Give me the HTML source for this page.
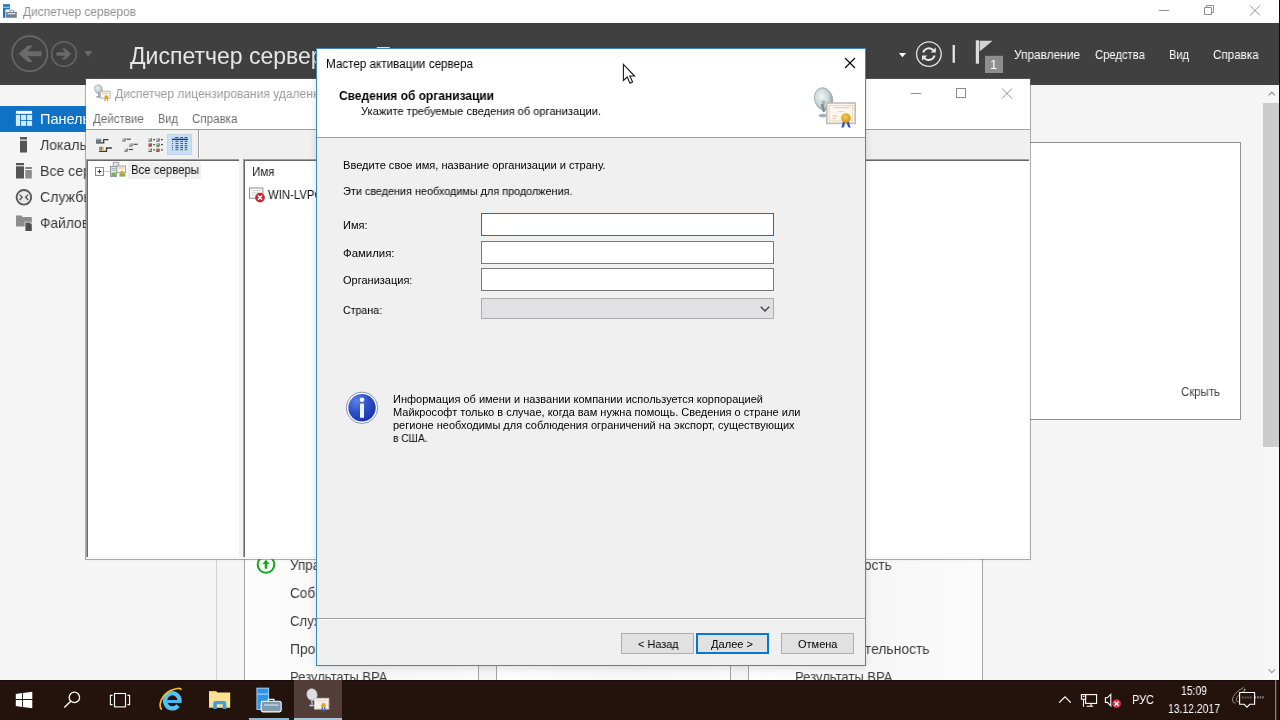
<!DOCTYPE html>
<html lang="ru">
<head>
<meta charset="utf-8">
<title>Диспетчер серверов</title>
<style>
html,body{margin:0;padding:0;}
body{width:1280px;height:720px;overflow:hidden;position:relative;background:#f5f5f5;font-family:"Liberation Sans",sans-serif;}
.a{position:absolute;}
.t{position:absolute;white-space:pre;transform-origin:0 50%;display:block;will-change:transform;}
svg{position:absolute;overflow:visible;}
/* ---------- Server Manager ---------- */
#sm{left:0;top:0;width:1280px;height:680px;background:#f5f5f5;overflow:hidden;}
#sm-title{left:0;top:0;width:1280px;height:23px;background:#fff;}
#sm-head{left:0;top:23px;width:1280px;height:62px;background:#404041;}
#nav-sel{left:0;top:106px;width:216px;height:26px;background:#1072c4;}
#sm-scroll{left:1263px;top:85px;width:17px;height:595px;background:#f6f6f6;}
#sm-thumb{left:1263px;top:103px;width:16px;height:344px;background:#cdcccd;}
#welcome{left:244px;top:142px;width:995px;height:276px;background:#fff;border:1px solid #929292;}
.tile{top:520px;width:233px;height:200px;background:linear-gradient(90deg,#fdfdfd,#f7f7f7 55%,#fbfbfb);border:1px solid #a2a2a2;}
/* ---------- Licensing Manager ---------- */
#lm{left:86px;top:79px;width:944px;height:480px;background:#fff;box-shadow:0 0 0 1px rgba(100,100,100,.5), 0 1px 3px rgba(0,0,0,.06);}
#lm-tool{left:0;top:50px;width:944px;height:30px;background:#f0f0f0;border-top:1px solid #a0a0a0;box-sizing:border-box;}
#lm-toolsel{left:81px;top:55px;width:25px;height:21px;background:#c9dff5;border:1px solid #bcd4ec;box-sizing:border-box;}
#lm-toolsep{left:112px;top:51px;width:1px;height:28px;background:#9c9c9c;box-shadow:1px 0 0 #fafafa;}
#lm-body{left:0;top:80px;width:944px;height:399px;background:#f4f4f4;}
#lm-tree{left:0;top:80px;width:153px;height:398px;background:#fff;border-left:1px solid #a0a0a0;border-top:1px solid #a0a0a0;box-shadow:inset 1px 1px 0 #696969;box-sizing:border-box;}
#lm-list{left:157px;top:80px;width:786px;height:398px;background:#fff;border-left:1px solid #a0a0a0;border-top:1px solid #a0a0a0;box-shadow:inset 1px 1px 0 #696969;box-sizing:border-box;}
#lm-treesel{left:42px;top:83px;width:73px;height:17px;background:#f0f0f0;}
/* ---------- Dialog ---------- */
#dlg{left:316px;top:48px;width:550px;height:618px;background:#f0f0f1;box-shadow:0 2px 8px rgba(0,0,0,.12);}
#dlg-border{left:0;top:0;width:550px;height:618px;box-sizing:border-box;border:1px solid #3a88c8;}
#dlg-top{left:1px;top:1px;width:548px;height:88px;background:#fff;}
#dlg-sep1{left:1px;top:89px;width:548px;height:1px;background:#a0a0a0;}
#dlg-sep2{left:1px;top:570px;width:548px;height:1px;background:#a0a0a0;}
#dlg-sep2b{left:1px;top:571px;width:548px;height:1px;background:#fff;}
.inp{left:165px;width:293px;height:23px;background:#fff;border:1px solid #7a7a7a;box-sizing:border-box;}
.btn{top:585px;width:73px;height:21px;background:#e1e1e1;border:1px solid #adadad;box-sizing:border-box;}
/* ---------- Taskbar ---------- */
#tb{left:0;top:680px;width:1280px;height:40px;background:#24120d;box-shadow:inset 0 1px 0 #1a0c09;}
#tb-act{left:294px;top:0;width:48px;height:40px;background:#523d39;}
</style>
</head>
<body>

<!-- ================= SERVER MANAGER ================= -->
<div id="sm" class="a">
  <div id="sm-title" class="a"></div>
  <div id="sm-head" class="a"></div>
  <div id="nav-sel" class="a"></div>
  <div id="welcome" class="a"></div>
  <div class="a" style="left:216px;top:520px;width:1px;height:160px;background:#d2d2d2;"></div>
  <div class="a tile" style="left:244px;"></div>
  <div class="a tile" style="left:496px;"></div>
  <div class="a tile" style="left:748px;"></div>
  <div id="sm-scroll" class="a"></div>
  <div id="sm-thumb" class="a"></div>
    <!-- title bar icon -->
  <svg style="left:0;top:0" width="24" height="23" viewBox="0 0 24 23">
    <rect x="3" y="4.2" width="7" height="13.6" fill="#1b74bd"/>
    <rect x="3" y="6.6" width="7" height="1.2" fill="#8fd0f5"/>
    <rect x="5.4" y="9.4" width="12" height="9" fill="#fff"/>
    <path d="M9.9 12 V10.9 Q9.9 10.2 10.6 10.2 H12.9 Q13.6 10.2 13.6 10.9 V12" fill="none" stroke="#7d8b98" stroke-width="1"/>
    <rect x="6.1" y="12" width="10.7" height="5.8" fill="#6f8294"/>
    <path d="M7.3 13.2 H15.6 L15 14.2 H7.9 Z" fill="#fff"/>
  </svg>
  <!-- window controls -->
  <svg style="left:1150px;top:0" width="130" height="23" viewBox="0 0 130 23">
    <g stroke="#8f8f8f" stroke-width="1" fill="none">
      <path d="M9 10.5 H19"/>
      <path d="M54.5 7.5 H61.5 V14.5 H54.5 Z"/>
      <path d="M56.5 7.5 V5.5 H63.5 V12.5 H61.5"/>
      <path d="M100 5.5 L110 15.5 M110 5.5 L100 15.5"/>
    </g>
  </svg>
  <!-- back / forward -->
  <svg style="left:0;top:23px" width="130" height="62" viewBox="0 23 130 62">
    <g fill="none" stroke="#686868">
      <circle cx="29.7" cy="53.7" r="17.6" stroke-width="1.6"/>
      <circle cx="64" cy="54" r="12.3" stroke-width="1.5"/>
    </g>
    <path d="M41.5 51.3 H27.5 L33 45.6 H28 L18.6 53.8 L28 62 H33 L27.5 56.3 H41.5 Z" fill="#6a6a6a"/>
    <path d="M56.5 52.3 H65.2 L61.6 48.6 H65.2 L71.2 54 L65.2 59.4 H61.6 L65.2 55.7 H56.5 Z" fill="#6a6a6a"/>
    <path d="M84.3 51 H92.3 L88.3 56.8 Z" fill="#6a6a6a"/>
  </svg>
  <!-- header right icons -->
  <svg style="left:890px;top:23px" width="124" height="62" viewBox="890 23 124 62">
    <path d="M898.9 53 H906 L902.45 57.3 Z" fill="#fff"/>
    <circle cx="928.9" cy="54.1" r="12.3" fill="none" stroke="#e4e4e4" stroke-width="1.3"/>
    <g fill="none" stroke="#e8e8e8" stroke-width="2">
      <path d="M923.2 52.6 A6 6 0 0 1 933.6 50.4"/>
      <path d="M934.6 55.6 A6 6 0 0 1 924.2 57.8"/>
    </g>
    <path d="M935.8 47.4 V52.6 H930.6 Z" fill="#e8e8e8"/>
    <path d="M922 60.8 V55.6 H927.2 Z" fill="#e8e8e8"/>
    <rect x="952.6" y="45" width="2.3" height="17.8" fill="#e6e6e6"/>
    <rect x="975.8" y="40.3" width="3.2" height="23.4" fill="#dcdcdc"/>
    <path d="M979.6 40.8 H992.6 L979.6 51.6 Z" fill="#d2d2d2"/>
    <rect x="985" y="55.8" width="18" height="17.2" fill="#8e8e8e"/>
  </svg>
  <span class="t" style="left:990.3px;top:56.5px;font-size:13px;line-height:16px;color:#fff;">1</span>
  <!-- nav icons -->
  <svg style="left:0;top:106px" width="40" height="130" viewBox="0 106 40 130">
    <rect x="15.9" y="110.9" width="16.2" height="2.9" fill="#fff"/>
    <g fill="#d4eafb">
      <rect x="15.9" y="114.9" width="4.1" height="11"/>
      <rect x="20.9" y="114.9" width="5.2" height="5.1"/>
      <rect x="27" y="114.9" width="5.1" height="5.1"/>
      <rect x="20.9" y="120.9" width="5.2" height="5"/>
      <rect x="27" y="120.9" width="5.1" height="5"/>
    </g>
    <!-- local server -->
    <rect x="20" y="137" width="7" height="2.5" fill="#555"/>
    <rect x="20" y="140.7" width="7" height="11.8" fill="#555"/>
    <!-- all servers -->
    <rect x="16" y="163" width="8" height="2.2" fill="#555"/>
    <rect x="16" y="166.3" width="8" height="12.2" fill="#555"/>
    <rect x="25.3" y="167" width="6.5" height="2" fill="#808080"/>
    <rect x="25.3" y="170" width="6.5" height="8.5" fill="#8a8a8a"/>
    <!-- RDS -->
    <circle cx="23.9" cy="197.3" r="7.3" fill="#e9e9e9" stroke="#585858" stroke-width="1.9"/>
    <path d="M19.6 194.6 L22.2 197.3 L19.6 200 M28.2 194.6 L25.6 197.3 L28.2 200" fill="none" stroke="#555" stroke-width="1.3"/>
    <!-- file services -->
    <path d="M16 215.5 H21.5 L22.5 217 H31.8 V226.6 H16 Z" fill="#8c8c8c"/>
    <path d="M24.7 221.7 H30 L32.4 224 V231.4 H24.7 Z" fill="#f4f4f4"/>
    <path d="M25.4 222.4 H29.6 L31.8 224.6 V231 H25.4 Z" fill="#4e4e4e"/>
  </svg>
  <!-- scrollbar arrows -->
  <svg style="left:1263px;top:85px" width="17" height="595" viewBox="0 0 17 595">
    <path d="M5.6 10.4 L8.8 7.2 L12 10.4" fill="none" stroke="#9a9a9a" stroke-width="1.3"/>
    <path d="M5.6 584.4 L8.8 587.6 L12 584.4" fill="none" stroke="#9a9a9a" stroke-width="1.3"/>
  </svg>
  <!-- tile green icon -->
  <svg style="left:254px;top:553px" width="24" height="24" viewBox="0 0 24 24">
    <circle cx="12" cy="11.5" r="8.3" fill="#fff" stroke="#16a716" stroke-width="2"/>
    <path d="M12 6.8 L15.6 11 H13.3 V15.8 H10.7 V11 H8.4 Z" fill="#16a716"/>
  </svg>

  <span class="t" style="left:23.00px;top:4px;font-size:12.5px;line-height:16px;color:#8e8e8e;transform:scaleX(0.9513);">Диспетчер серверов</span>
<span class="t" style="left:130.00px;top:41px;font-size:23px;line-height:30px;color:#e6e6e6;">Диспетчер серверов</span>
<span class="t" style="left:375.00px;top:41px;font-size:23px;line-height:30px;color:#e6e6e6;">Панель мониторинга</span>
<span class="t" style="left:1014.00px;top:47px;font-size:12.3px;line-height:16px;color:#ffffff;transform:scaleX(0.9655);">Управление</span>
<span class="t" style="left:1094.80px;top:47px;font-size:12.3px;line-height:16px;color:#ffffff;transform:scaleX(0.9140);">Средства</span>
<span class="t" style="left:1169.40px;top:47px;font-size:12.3px;line-height:16px;color:#ffffff;transform:scaleX(0.8989);">Вид</span>
<span class="t" style="left:1213.00px;top:47px;font-size:12.3px;line-height:16px;color:#ffffff;transform:scaleX(0.9451);">Справка</span>
<span class="t" style="left:40.40px;top:110px;font-size:14.5px;line-height:19px;color:#ffffff;">Панель мониторинга</span>
<span class="t" style="left:40.40px;top:136px;font-size:14.5px;line-height:19px;color:#3a3a3a;transform:scaleX(0.9687);">Локальный сервер</span>
<span class="t" style="left:40.40px;top:162px;font-size:14.5px;line-height:19px;color:#3a3a3a;transform:scaleX(0.9713);">Все серверы</span>
<span class="t" style="left:40.40px;top:188px;font-size:14.5px;line-height:19px;color:#3a3a3a;transform:scaleX(0.9731);">Службы удаленных рабочих столов</span>
<span class="t" style="left:40.40px;top:214px;font-size:14.5px;line-height:19px;color:#3a3a3a;transform:scaleX(0.9498);">Файловые службы и службы хранилища</span>
<span class="t" style="left:1180.50px;top:383px;font-size:13px;line-height:17px;color:#444;transform:scaleX(0.8786);">Скрыть</span>
<span class="t" style="left:290.00px;top:556px;font-size:14px;line-height:18px;color:#3c3c3c;transform:scaleX(0.9632);">Управляемость</span>
<span class="t" style="left:290.00px;top:584px;font-size:14px;line-height:18px;color:#3c3c3c;transform:scaleX(0.9689);">События</span>
<span class="t" style="left:290.00px;top:612px;font-size:14px;line-height:18px;color:#3c3c3c;transform:scaleX(0.9426);">Службы</span>
<span class="t" style="left:290.00px;top:640px;font-size:14px;line-height:18px;color:#3c3c3c;transform:scaleX(0.9898);">Производительность</span>
<span class="t" style="left:290.00px;top:668px;font-size:14px;line-height:18px;color:#3c3c3c;transform:scaleX(0.9320);">Результаты BPA</span>
<span class="t" style="left:794.50px;top:556px;font-size:14px;line-height:18px;color:#3c3c3c;transform:scaleX(0.9632);">Управляемость</span>
<span class="t" style="left:794.50px;top:584px;font-size:14px;line-height:18px;color:#3c3c3c;transform:scaleX(0.9689);">События</span>
<span class="t" style="left:794.50px;top:612px;font-size:14px;line-height:18px;color:#3c3c3c;transform:scaleX(0.9426);">Службы</span>
<span class="t" style="left:794.50px;top:640px;font-size:14px;line-height:18px;color:#3c3c3c;transform:scaleX(0.9898);">Производительность</span>
<span class="t" style="left:794.50px;top:668px;font-size:14px;line-height:18px;color:#3c3c3c;transform:scaleX(0.9320);">Результаты BPA</span>
</div>

<!-- ================= LICENSING MANAGER ================= -->
<div id="lm" class="a">
  <div id="lm-tool" class="a"></div>
  <div id="lm-toolsel" class="a"></div>
  <div id="lm-toolsep" class="a"></div>
  <div id="lm-body" class="a"></div>
  <div id="lm-tree" class="a"></div>
  <div id="lm-list" class="a"></div>
  <div id="lm-treesel" class="a"></div>
    <!-- coordinates inside #lm are page coords minus (86,79); svg uses page viewBox -->
  <svg style="left:0;top:0" width="944" height="479" viewBox="86 79 944 479">
    <defs>
      <radialGradient id="dishg" cx="45%" cy="40%" r="65%">
        <stop offset="0" stop-color="#e6f0f4"/><stop offset="0.6" stop-color="#c3d0d6"/><stop offset="1" stop-color="#8e9aa0"/>
      </radialGradient>
    </defs>
    <!-- title icon -->
    <ellipse cx="98.4" cy="89" rx="3.9" ry="4.3" fill="url(#dishg)" stroke="#a9b4ba" stroke-width=".6" transform="rotate(-18 98.4 89)"/>
    <path d="M98.6 93 L99.2 96.3" stroke="#8a9499" stroke-width="1.4"/>
    <ellipse cx="98.6" cy="96.8" rx="2.6" ry="1" fill="#9aa4a9"/>
    <rect x="100.4" y="91.2" width="9.8" height="7" fill="#fdf5ea" stroke="#b8b8b8" stroke-width="1"/>
    <path d="M102 93.2 H108.6" stroke="#e0a878" stroke-width=".7"/>
    <circle cx="106.4" cy="97.2" r="1.9" fill="#dca21e"/>
    <path d="M105.2 98.6 L104.8 101 M107.5 98.6 L107.9 101" stroke="#c8952a" stroke-width="1.1"/>
    <!-- window controls -->
    <g stroke="#8c8c8c" stroke-width="1" fill="none">
      <path d="M911 93.5 H921"/>
      <rect x="956.5" y="88.5" width="9" height="9"/>
      <path d="M1002 88.5 L1012 98.5 M1012 88.5 L1002 98.5"/>
    </g>
    <!-- toolbar icon 1: large icons -->
    <defs>
      <linearGradient id="pic1" x1="0" y1="0" x2="0" y2="1"><stop offset="0" stop-color="#c9d8e4"/><stop offset="1" stop-color="#35485a"/></linearGradient>
    </defs>
    <g>
      <rect x="96" y="138.2" width="5.3" height="3.5" fill="url(#pic1)"/>
      <path d="M96 142.8 H103.7 V139.6 H108.6" fill="none" stroke="#3b3b3b" stroke-width="1.3"/>
      <rect x="99" y="146.8" width="1.6" height="3.4" fill="#7aa84a"/>
      <rect x="100.6" y="146.8" width="1.6" height="3.4" fill="#c8503c"/>
      <rect x="102.2" y="146.8" width="1.5" height="3.4" fill="#d8b848"/>
      <path d="M99 151.3 H106.5 V148 H111.9" fill="none" stroke="#3b3b3b" stroke-width="1.3"/>
    </g>
    <!-- toolbar icon 2: small icons -->
    <g>
      <g id="sbox">
        <rect x="122.2" y="138.2" width="2.6" height="2.5" fill="#b9ccb9"/>
        <path d="M122.2 141 H125.1 V138.2" fill="none" stroke="#505050" stroke-width=".9"/>
        <path d="M126.5 139.2 H130.8" stroke="#4a4a4a" stroke-width="1.2"/>
      </g>
      <g transform="translate(6.9 5.1)">
        <rect x="122.2" y="138.2" width="2.6" height="2.5" fill="#b9ccb9"/>
        <path d="M122.2 141 H125.1 V138.2" fill="none" stroke="#505050" stroke-width=".9"/>
        <path d="M126.5 139.2 H130.8" stroke="#4a4a4a" stroke-width="1.2"/>
      </g>
      <g transform="translate(2.2 10.3)">
        <rect x="122.2" y="138.2" width="2.6" height="2.5" fill="#b9ccb9"/>
        <path d="M122.2 141 H125.1 V138.2" fill="none" stroke="#505050" stroke-width=".9"/>
        <path d="M126.5 139.2 H130.8" stroke="#4a4a4a" stroke-width="1.2"/>
      </g>
    </g>
    <!-- toolbar icon 3: list -->
    <g>
      <rect x="148.4" y="138.2" width="2.7" height="2.7" fill="#a9c6a9"/><path d="M148.4 141.2 H151.4 V138.2" fill="none" stroke="#505050" stroke-width=".9"/><path d="M153.2 139.6 H155.1" stroke="#4a4a4a" stroke-width="1.2"/>
      <rect x="148.4" y="143.3" width="2.7" height="2.7" fill="#c25a5a"/><path d="M148.4 146.3 H151.4 V143.3" fill="none" stroke="#505050" stroke-width=".9"/><path d="M153.2 144.7 H155.1" stroke="#4a4a4a" stroke-width="1.2"/>
      <rect x="148.4" y="148.5" width="2.7" height="2.7" fill="#b4c8b4"/><path d="M148.4 151.5 H151.4 V148.5" fill="none" stroke="#505050" stroke-width=".9"/><path d="M153.2 149.9 H155.1" stroke="#4a4a4a" stroke-width="1.2"/>
      <rect x="156.2" y="138.2" width="2.7" height="2.7" fill="#b8c0b8"/><path d="M156.2 141.2 H159.2 V138.2" fill="none" stroke="#505050" stroke-width=".9"/><path d="M161.0 139.6 H162.9" stroke="#4a4a4a" stroke-width="1.2"/>
      <rect x="156.2" y="143.3" width="2.7" height="2.7" fill="#8fc08f"/><path d="M156.2 146.3 H159.2 V143.3" fill="none" stroke="#505050" stroke-width=".9"/><path d="M161.0 144.7 H162.9" stroke="#4a4a4a" stroke-width="1.2"/>
      <rect x="156.2" y="148.5" width="2.7" height="2.7" fill="#c25a5a"/><path d="M156.2 151.5 H159.2 V148.5" fill="none" stroke="#505050" stroke-width=".9"/><path d="M161.0 149.9 H162.9" stroke="#4a4a4a" stroke-width="1.2"/>
    </g>
    <!-- toolbar icon 4: details -->
    <g stroke="#3f5f8c" stroke-width="1.1" fill="none">
      <path d="M175.1 137.5 H178.5 M180.2 137.5 H183 M184.5 137.5 H187.5"/>
      <path d="M172 139.3 H188" stroke="#1b2b7c" stroke-width="1.3"/>
      <path d="M172.1 141.4 H173 M175.5 141.4 H178.5 M180.3 141.4 H183 M184.7 141.4 H187.3"/>
      <path d="M172.1 143.5 H173 M175.5 143.5 H178.5 M180.3 143.5 H183 M184.7 143.5 H187.3"/>
      <path d="M172.1 145.6 H173 M175.5 145.6 H178.5 M180.3 145.6 H183 M184.7 145.6 H187.3"/>
      <path d="M172.1 147.6 H173 M175.5 147.6 H178.5 M180.3 147.6 H183 M184.7 147.6 H187.3"/>
      <path d="M172.1 149.7 H173 M175.5 149.7 H178.5 M180.3 149.7 H183 M184.7 149.7 H187.3"/>
    </g>
    <!-- tree expander -->
    <rect x="95.5" y="167.5" width="8" height="8" fill="#fff" stroke="#8a8a8a" stroke-width="1"/>
    <path d="M97.5 171.5 H101.5 M99.5 169.5 V173.5" stroke="#333" stroke-width="1"/>
    <path d="M104.5 171.5 H110" stroke="#9a9a9a" stroke-width="1" stroke-dasharray="1 1"/>
    <!-- tree icon: servers -->
    <g>
      <rect x="113.2" y="162.2" width="5.6" height="7" fill="#dfe3e6" stroke="#8b9398" stroke-width=".8"/>
      <rect x="110.6" y="166.4" width="6" height="10" fill="#e6e9eb" stroke="#7f878c" stroke-width=".8"/>
      <rect x="111.4" y="172.6" width="4.4" height="3.4" fill="#77b255"/>
      <path d="M111.6 168.4 H115.6 M111.6 170.2 H115.6" stroke="#8a9297" stroke-width=".7"/>
      <rect x="116.8" y="166" width="8.8" height="6.6" fill="#fbf4ea" stroke="#9a9a9a" stroke-width=".9"/>
      <path d="M118.4 168 H124" stroke="#e0a070" stroke-width=".7"/>
      <circle cx="122" cy="172.6" r="1.9" fill="#dca21e"/>
      <rect x="119.4" y="173.4" width="6" height="3.2" fill="#77b255"/>
      <circle cx="122.2" cy="173" r="1.6" fill="#e0a820"/>
    </g>
    <!-- list item icon -->
    <g>
      <rect x="249.5" y="188" width="13.4" height="10.2" fill="#fcfcfc" stroke="#8e8e8e" stroke-width="1"/>
      <path d="M251.6 190.6 H260.8 M251.6 192.8 H258.6 M251.6 195 H255.4" stroke="#c9c0bc" stroke-width=".8"/>
      <circle cx="260" cy="197.6" r="4.5" fill="#cf2030" stroke="#a01522" stroke-width=".6"/>
      <path d="M257.9 195.5 L262.1 199.7 M262.1 195.5 L257.9 199.7" stroke="#fff" stroke-width="1.5"/>
    </g>
  </svg>

</div>
<div class="a" style="left:86px;top:79px;width:944px;height:479px;overflow:hidden;">
  <div class="a" style="left:-86px;top:-79px;width:1280px;height:720px;">
  <span class="t" style="left:115.20px;top:86px;font-size:12.5px;line-height:16px;color:#9a9a9a;transform:scaleX(0.9648);">Диспетчер лицензирования удаленных рабочих столов</span>
<span class="t" style="left:93.30px;top:111px;font-size:12.5px;line-height:16px;color:#6d6d6d;transform:scaleX(0.9226);">Действие</span>
<span class="t" style="left:158.00px;top:111px;font-size:12.5px;line-height:16px;color:#6d6d6d;transform:scaleX(0.8840);">Вид</span>
<span class="t" style="left:192.30px;top:111px;font-size:12.5px;line-height:16px;color:#6d6d6d;transform:scaleX(0.9277);">Справка</span>
<span class="t" style="left:131.40px;top:162px;font-size:12.5px;line-height:16px;color:#111;transform:scaleX(0.9120);">Все серверы</span>
<span class="t" style="left:252.00px;top:164px;font-size:12.5px;line-height:16px;color:#222;transform:scaleX(0.9237);">Имя</span>
<span class="t" style="left:267.50px;top:187px;font-size:12.5px;line-height:16px;color:#111;transform:scaleX(0.9079);">WIN-LVPGO8B2KQ1</span>
  </div>
</div>

<!-- ================= DIALOG ================= -->
<div id="dlg" class="a">
  <div id="dlg-top" class="a"></div>
  <div id="dlg-sep1" class="a"></div>
  <div class="a inp" style="top:165px;border-color:#0078d7;"></div>
  <div class="a inp" style="top:193px;"></div>
  <div class="a inp" style="top:220px;"></div>
  <div class="a inp" style="top:250px;height:21px;background:#e1e0e2;border-color:#adadad;"></div>
  <div id="dlg-sep2" class="a"></div>
  <div id="dlg-sep2b" class="a"></div>
  <div class="a btn" style="left:305px;"></div>
  <div class="a btn" style="left:380px;border:2px solid #0078d7;"></div>
  <div class="a btn" style="left:465px;"></div>
    <!-- svg in page coords; #dlg border-box origin at (317,48), content origin (318,49) -->
  <svg style="left:0;top:0" width="550" height="618" viewBox="316 48 550 618">
    <defs>
      <radialGradient id="dishG" cx="42%" cy="38%" r="70%">
        <stop offset="0" stop-color="#eef5f7"/><stop offset="0.55" stop-color="#c9d6da"/><stop offset="1" stop-color="#7f8a90"/>
      </radialGradient>
      <radialGradient id="infoG" cx="30%" cy="25%" r="85%">
        <stop offset="0" stop-color="#5b82e4"/><stop offset="0.5" stop-color="#2c52c8"/><stop offset="1" stop-color="#1733a6"/>
      </radialGradient>
      <radialGradient id="sealG" cx="45%" cy="40%" r="60%">
        <stop offset="0" stop-color="#f8cf50"/><stop offset="1" stop-color="#cf9312"/>
      </radialGradient>
    </defs>
    <!-- close X -->
    <path d="M845 58 L855 68 M855 58 L845 68" stroke="#000" stroke-width="1.1" fill="none"/>
    <!-- header icon: dish + certificate -->
    <ellipse cx="823.6" cy="99" rx="9" ry="11.4" fill="url(#dishG)" stroke="#9aa5aa" stroke-width=".8" transform="rotate(-16 823.6 99)"/>
    <path d="M822 104 L824 112" stroke="#7d878c" stroke-width="2.2"/>
    <path d="M821.4 100.5 L823.4 108 L825.4 101" fill="#7d888e" opacity=".55"/>
    <ellipse cx="823" cy="115.6" rx="4.4" ry="1.8" fill="#a5afb4"/>
    <rect x="826.8" y="103" width="28.4" height="20.4" fill="#fdf6ec" stroke="#bdbdbd" stroke-width="1.6"/>
    <rect x="829.2" y="105.4" width="23.6" height="15.6" fill="none" stroke="#f0c8a0" stroke-width=".7"/>
    <path d="M833 107.6 H849.5" stroke="#c9b8a8" stroke-width=".7"/>
    <path d="M837.5 111.5 H844" stroke="#d8c8b8" stroke-width=".7"/>
    <path d="M832.5 116 H837.5 M832.5 118.4 H836" stroke="#e4b8a8" stroke-width=".8"/>
    <path d="M843.2 120.5 L841.4 128 L844 127 L845.4 121.5 Z M848.6 120.5 L850.6 128 L848 127 L846.4 121.5 Z" fill="#2c50cc"/>
    <circle cx="845.9" cy="118.1" r="4.8" fill="url(#sealG)"/>
    <!-- combobox chevron -->
    <path d="M760.8 306.7 L765 310.9 L769.2 306.7" fill="none" stroke="#404040" stroke-width="1.4"/>
    <!-- info icon -->
    <circle cx="362" cy="407.8" r="15.7" fill="#fff" stroke="#8793ad" stroke-width="1"/>
    <circle cx="362" cy="407.8" r="13.7" fill="url(#infoG)"/>
    <circle cx="362" cy="399.7" r="2.3" fill="#fff"/>
    <rect x="360" y="403.6" width="4" height="14.2" rx=".6" fill="#f2f2f2"/>
  </svg>

  <div id="dlg-border" class="a"></div>
</div>
<div class="a" style="left:0;top:0;width:1280px;height:720px;">
<span class="t" style="left:325.50px;top:56px;font-size:12px;line-height:16px;color:#000;transform:scaleX(0.9719);">Мастер активации сервера</span>
<span class="t" style="left:339.00px;top:88px;font-size:12.5px;line-height:16px;color:#000;font-weight:700;transform:scaleX(0.9572);">Сведения об организации</span>
<span class="t" style="left:361.00px;top:104px;font-size:11.2px;line-height:15px;color:#000;transform:scaleX(0.9911);">Укажите требуемые сведения об организации.</span>
<span class="t" style="left:343.00px;top:158px;font-size:11px;line-height:14px;color:#000;transform:scaleX(1.0062);">Введите свое имя, название организации и страну.</span>
<span class="t" style="left:343.00px;top:184px;font-size:11px;line-height:14px;color:#000;transform:scaleX(0.9857);">Эти сведения необходимы для продолжения.</span>
<span class="t" style="left:343.00px;top:218px;font-size:11px;line-height:14px;color:#000;">Имя:</span>
<span class="t" style="left:343.00px;top:246px;font-size:11px;line-height:14px;color:#000;transform:scaleX(1.0349);">Фамилия:</span>
<span class="t" style="left:343.00px;top:273px;font-size:11px;line-height:14px;color:#000;">Организация:</span>
<span class="t" style="left:343.00px;top:303px;font-size:11px;line-height:14px;color:#000;transform:scaleX(0.9637);">Страна:</span>
<span class="t" style="left:393.00px;top:392px;font-size:11px;line-height:14px;color:#000;">Информация об имени и названии компании используется корпорацией</span>
<span class="t" style="left:393.00px;top:405px;font-size:11px;line-height:14px;color:#000;">Майкрософт только в случае, когда вам нужна помощь. Сведения о стране или</span>
<span class="t" style="left:393.00px;top:418px;font-size:11px;line-height:14px;color:#000;">регионе необходимы для соблюдения ограничений на экспорт, существующих</span>
<span class="t" style="left:393.00px;top:431px;font-size:11px;line-height:14px;color:#000;transform:scaleX(0.9242);">в США.</span>
<span class="t" style="left:637.50px;top:637px;font-size:11px;line-height:14px;color:#000;transform:scaleX(0.9878);">&lt; Назад</span>
<span class="t" style="left:711.00px;top:637px;font-size:11px;line-height:14px;color:#000;transform:scaleX(1.0071);">Далее &gt;</span>
<span class="t" style="left:797.50px;top:637px;font-size:11px;line-height:14px;color:#000;transform:scaleX(0.9881);">Отмена</span>
</div>

<!-- ================= TASKBAR ================= -->
<div id="tb" class="a">
  <div id="tb-act" class="a"></div>
    <svg style="left:0;top:0" width="1280" height="40" viewBox="0 680 1280 40">
    <!-- active / running underlines -->
    <rect x="249" y="718" width="40" height="2" fill="#8fb4d4"/>
    <rect x="294" y="718" width="48" height="2" fill="#a9c6e0"/>
    <!-- start -->
    <g fill="#fff">
      <path d="M15.8 693.9 L22.1 693 V699 H15.8 Z"/>
      <path d="M23 692.9 L32.3 691.7 V699 H23 Z"/>
      <path d="M15.8 699.9 H22.1 V706.9 L15.8 706 Z"/>
      <path d="M23 699.9 H32.3 V708.2 L23 707 Z"/>
    </g>
    <!-- search -->
    <circle cx="74.4" cy="697.4" r="5.2" fill="none" stroke="#fff" stroke-width="1.3"/>
    <path d="M70.7 701.2 L64.3 707.6" stroke="#fff" stroke-width="1.4"/>
    <!-- task view -->
    <g fill="none" stroke="#fff" stroke-width="1.1">
      <rect x="114.5" y="693.5" width="11" height="13.4"/>
      <path d="M112.6 695.4 H110.4 V704.6 H112.6 M127.4 695.4 H129.6 V704.6 H127.4"/>
    </g>
    <!-- IE -->
    <g fill="none">
      <path d="M179.6 700.4 A7.3 7.6 0 1 0 178 705.6" stroke="#52c2f0" stroke-width="4.2"/>
      <path d="M166.2 701.5 H181.6" stroke="#4ab8ec" stroke-width="3"/>
      <path d="M161.6 709.6 C157.4 704.4 162.6 694.6 170.6 690.6 C175.6 688.2 180.6 687.6 181.5 689.8" stroke="#efbf2f" stroke-width="1.7"/>
    </g>
    <!-- explorer -->
    <g>
      <path d="M209 691.2 H216 L217.4 692.6 H230.2 V707.8 H209 Z" fill="#fbe192"/>
      <path d="M209 691.2 H216 L217.4 692.6 H209 Z" fill="#f3d06a"/>
      <path d="M213.3 709 V703.2 Q213.3 701 215.5 701 H224.1 Q226.3 701 226.3 703.2 V709 H222.8 V704.3 H216.8 V709 Z" fill="#3d9fe2"/>
    </g>
    <!-- server manager -->
    <g>
      <rect x="256.9" y="688.1" width="11.8" height="21.4" fill="#2e95e5" stroke="#cfe8fc" stroke-width=".8"/>
      <rect x="257.3" y="693.6" width="11" height="1" fill="#b5deff"/>
      <path d="M268.4 701 V699.4 H273.9 V701" fill="none" stroke="#e8f0f6" stroke-width="1.3"/>
      <rect x="261.2" y="701.3" width="20" height="10.6" rx="1.8" fill="#7f9db2" stroke="#fbfdff" stroke-width="1.1"/>
      <path d="M264 705 H278.4" stroke="#e4edf3" stroke-width="1"/>
    </g>
    <!-- licensing icon -->
    <g>
      <ellipse cx="312" cy="694.6" rx="5.2" ry="6" fill="#dcdfe0" stroke="#b4b9bb" stroke-width=".5" transform="rotate(-14 312 694.6)"/>
      <path d="M311.4 699 L312.2 704.4" stroke="#b0b6b9" stroke-width="1.5"/>
      <ellipse cx="311.6" cy="705.4" rx="2.6" ry="1" fill="#c2c8cb"/>
      <rect x="314.4" y="698.3" width="14.4" height="10.8" fill="#f6efea" stroke="#d2ccc8" stroke-width=".9"/>
      <path d="M316.6 700.8 H326.4" stroke="#e8d0b8" stroke-width=".7"/>
      <path d="M322.4 707 L321.9 711.4 M324.6 707 L325.1 711.4" stroke="#3a5cc8" stroke-width="1.3"/>
      <circle cx="323.5" cy="705.4" r="2.4" fill="#e2aa1e"/>
    </g>
    <!-- tray chevron -->
    <path d="M1059.2 702.6 L1065 696.8 L1070.8 702.6" fill="none" stroke="#fff" stroke-width="1.3"/>
    <!-- network -->
    <g fill="none" stroke="#fff" stroke-width="1.1">
      <rect x="1085.6" y="694.6" width="11" height="8.8"/>
      <path d="M1091 703.4 V706.2 M1086.6 706.3 H1093.2"/>
      <rect x="1081.4" y="694.6" width="4.2" height="4.6"/>
      <path d="M1083.5 699.2 V706.8 M1082.8 696.4 H1084.4"/>
    </g>
    <!-- speaker -->
    <path d="M1105.4 697.8 H1107.4 L1110.8 694.4 V705.8 L1107.4 702.4 H1105.4 Z" fill="none" stroke="#fff" stroke-width="1.1"/>
    <circle cx="1116.6" cy="703.7" r="4.4" fill="#d3324c"/>
    <path d="M1114.6 701.7 L1118.6 705.7 M1118.6 701.7 L1114.6 705.7" stroke="#fff" stroke-width="1.3"/>
    <!-- watermark swirl -->
    <g fill="none" stroke="#a09896" stroke-width=".9">
      <path d="M1243.6 687.4 Q1233 693 1232.4 700 Q1232.6 703 1235.4 703.4"/>
      <path d="M1245 690.6 Q1236.4 695 1236.2 700.4 Q1236.6 702.2 1238.6 701.6"/>
    </g>
    <circle cx="1244.6" cy="689.6" r=".9" fill="#c8c0be"/>
    <path d="M1241.4 697.4 H1264" stroke="#8a807d" stroke-width="2.4" stroke-dasharray="1.6 1"/>
    <!-- notification -->
    <path d="M1239.6 692.5 H1254.6 V704.3 H1249.8 L1247 707.2 L1244.2 704.3 H1239.6 Z" fill="#24120e" stroke="#fff" stroke-width="1.1"/>
    <path d="M1242 697.4 H1252.6" stroke="#6c6260" stroke-width="2" stroke-dasharray="1.6 1"/>
    <!-- show desktop -->
    <rect x="1275" y="680" width="1.2" height="40" fill="#8f827f"/>
  </svg>

</div>
<div class="a" style="left:0;top:0;width:1280px;height:720px;">
<span class="t" style="left:1132.20px;top:692px;font-size:12px;line-height:16px;color:#fff;transform:scaleX(0.9155);">РУС</span>
<span class="t" style="left:1181.00px;top:683px;font-size:12px;line-height:16px;color:#fff;transform:scaleX(0.8658);">15:09</span>
<span class="t" style="left:1168.40px;top:701px;font-size:12px;line-height:16px;color:#fff;transform:scaleX(0.8658);">13.12.2017</span>
</div>

<svg style="left:620px;top:61px" width="20" height="26" viewBox="620 61 20 26">
  <path d="M623.4 64.3 V80.4 L627.2 77 L630 83.2 L632.6 82 L629.8 76 H634.6 Z" fill="#fff" stroke="#1a1a1a" stroke-width="1.1" stroke-linejoin="miter"/>
</svg>

<div class="a" style="left:1279px;top:0;width:1px;height:720px;background:#0c0c0c;"></div>
</body>
</html>
